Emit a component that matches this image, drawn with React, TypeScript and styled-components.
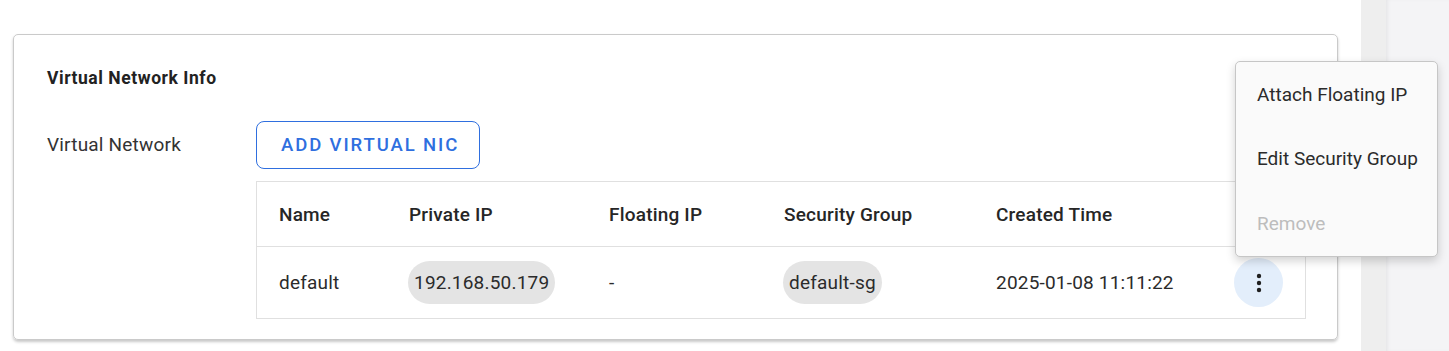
import React from 'react';
import styled, { createGlobalStyle } from 'styled-components';

const GlobalStyle = createGlobalStyle`
  html, body {
    margin: 0;
    padding: 0;
    height: 100%;
    background: #ffffff;
    font-family: Roboto, 'Liberation Sans', sans-serif;
    color: rgba(0, 0, 0, 0.87);
  }
  #root {
    height: 100%;
  }
`;

const Page = styled.div`
  display: flex;
  height: 100vh;
  overflow: hidden;
`;

const Main = styled.main`
  flex: 1;
  position: relative;
  background: #ffffff;
  padding: 34px 23px 0 13px;
`;

const Rail = styled.div`
  width: 25px;
  background: #eeeeee;
`;

const SidePanel = styled.aside`
  width: 63px;
  background: #f4f4f6;
  box-shadow: inset 3px 0 4px -2px rgba(0, 0, 0, 0.08);
`;

const Card = styled.section`
  border: 1px solid #cacaca;
  border-radius: 5px;
  box-shadow: 0 2px 3px rgba(0, 0, 0, 0.22);
  padding: 31px 31px 20px 33px;
`;

const Title = styled.h3`
  margin: 0;
  font-size: 17.5px;
  font-weight: 700;
  letter-spacing: 0.55px;
  line-height: 25px;
  color: #222222;
`;

const FormRow = styled.div`
  display: grid;
  grid-template-columns: 209px 1fr;
  margin-top: 30px;
`;

const Label = styled.div`
  font-size: 19px;
  letter-spacing: 0.2px;
  line-height: 48px;
  color: #333333;
`;

const Field = styled.div`
  display: flex;
  flex-direction: column;
  align-items: flex-start;
  gap: 12px;
`;

const OutlineButton = styled.button`
  height: 48px;
  padding: 0 20px 0 24px;
  border: 1px solid #2f6fdf;
  border-radius: 8px;
  background: #ffffff;
  color: #2f6fdf;
  font-family: Roboto, 'Liberation Sans', sans-serif;
  font-size: 18.5px;
  font-weight: 500;
  letter-spacing: 1.9px;
  cursor: pointer;
`;

const Table = styled.div`
  align-self: stretch;
  border: 1px solid #e0e0e0;
`;

const columns = '130px 200px 175px 212px 260px 1fr';

const Row = styled.div<{ $header?: boolean }>`
  display: grid;
  grid-template-columns: ${columns};
  align-items: center;
  height: ${(p) => (p.$header ? 64 : 71)}px;
  border-top: ${(p) => (p.$header ? 'none' : '1px solid #e0e0e0')};
  font-size: 19px;
  letter-spacing: 0.2px;
  font-weight: ${(p) => (p.$header ? 500 : 400)};
  color: ${(p) => (p.$header ? '#262626' : '#2b2b2b')};
`;

const Cell = styled.div`
  padding-left: 22px;
  white-space: nowrap;
`;

const Chip = styled.span`
  display: inline-flex;
  align-items: center;
  height: 43px;
  padding: 0 6px 0 6px;
  margin-left: -1px;
  border-radius: 22px;
  background: #e4e4e4;
`;

const ActionCell = styled.div`
  display: flex;
  justify-content: flex-start;
`;

const KebabButton = styled.button`
  width: 49px;
  height: 49px;
  border: none;
  border-radius: 50%;
  background: #e3eefb;
  display: flex;
  align-items: center;
  justify-content: center;
  padding: 0;
  cursor: pointer;
`;

const Menu = styled.ul`
  position: absolute;
  top: 61px;
  left: 1235px;
  width: 201px;
  margin: 0;
  padding: 0;
  list-style: none;
  background: #fafafa;
  border: 1px solid #c6c6c6;
  border-radius: 5px;
  box-shadow: 0 4px 10px rgba(0, 0, 0, 0.18);
`;

const MenuItem = styled.li<{ $disabled?: boolean }>`
  height: 64.5px;
  display: flex;
  align-items: center;
  padding-left: 21px;
  font-size: 19px;
  color: ${(p) => (p.$disabled ? '#bdbdbd' : '#2b2b2b')};
  cursor: ${(p) => (p.$disabled ? 'default' : 'pointer')};
`;

const KebabIcon = () => (
  <svg width="6" height="20" viewBox="0 0 6 20">
    <circle cx="3" cy="3" r="2.2" fill="#1f1f1f" />
    <circle cx="3" cy="10" r="2.2" fill="#1f1f1f" />
    <circle cx="3" cy="17" r="2.2" fill="#1f1f1f" />
  </svg>
);

const headers = ['Name', 'Private IP', 'Floating IP', 'Security Group', 'Created Time', ''];

export default function App() {
  return (
    <>
      <GlobalStyle />
      <Page>
        <Main>
          <Card>
            <Title>Virtual Network Info</Title>
            <FormRow>
              <Label>Virtual Network</Label>
              <Field>
                <OutlineButton>ADD VIRTUAL NIC</OutlineButton>
                <Table>
                  <Row $header>
                    {headers.map((h) => (
                      <Cell key={h || 'actions'}>{h}</Cell>
                    ))}
                  </Row>
                  <Row>
                    <Cell>default</Cell>
                    <Cell>
                      <Chip>192.168.50.179</Chip>
                    </Cell>
                    <Cell>-</Cell>
                    <Cell>
                      <Chip>default-sg</Chip>
                    </Cell>
                    <Cell>2025-01-08 11:11:22</Cell>
                    <ActionCell>
                      <KebabButton aria-label="actions">
                        <KebabIcon />
                      </KebabButton>
                    </ActionCell>
                  </Row>
                </Table>
              </Field>
            </FormRow>
          </Card>
          <Menu>
            <MenuItem>Attach Floating IP</MenuItem>
            <MenuItem>Edit Security Group</MenuItem>
            <MenuItem $disabled>Remove</MenuItem>
          </Menu>
        </Main>
        <Rail />
        <SidePanel />
      </Page>
    </>
  );
}
